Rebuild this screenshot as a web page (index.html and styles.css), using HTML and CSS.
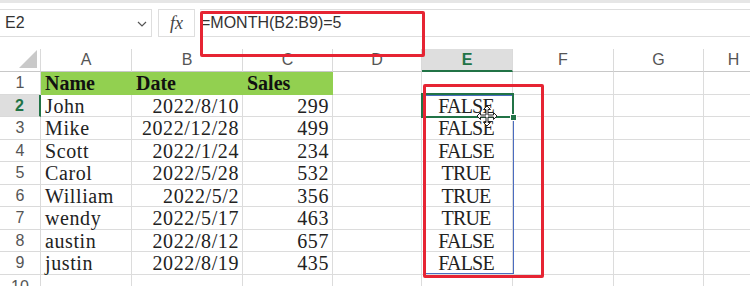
FILE: index.html
```html
<!DOCTYPE html>
<html lang="en">
<head>
  <meta charset="UTF-8">
  <title>MONTH formula</title>
  <link rel="stylesheet" href="styles.css">
</head>
<body>
  <div class="app">
    <div class="top-strip"></div>

    <div class="formula-bar">
      <div class="name-box">
        <span>E2</span>
        <svg class="chevron" width="10" height="6" viewBox="0 0 10 6"><path d="M1 1 L5 5 L9 1" fill="none" stroke="#555" stroke-width="1.2"/></svg>
      </div>
      <div class="fx-box">fx</div>
      <div class="formula-input">=MONTH(B2:B9)=5</div>
    </div>

    <div class="sheet">
      <div class="corner"><span class="tri"></span></div>
      <div class="col-head">A</div>
      <div class="col-head">B</div>
      <div class="col-head">C</div>
      <div class="col-head">D</div>
      <div class="col-head active">E</div>
      <div class="col-head">F</div>
      <div class="col-head">G</div>
      <div class="col-head">H</div>

      <div class="row-head">1</div>
      <div class="cell hdr left">Name</div>
      <div class="cell hdr left">Date</div>
      <div class="cell hdr left">Sales</div>
      <div class="cell"></div><div class="cell"></div><div class="cell"></div><div class="cell"></div><div class="cell"></div>

      <div class="row-head active">2</div>
      <div class="cell left">John</div>
      <div class="cell right">2022/8/10</div>
      <div class="cell right">299</div>
      <div class="cell"></div>
      <div class="cell bool">FALSE</div>
      <div class="cell"></div><div class="cell"></div><div class="cell"></div>

      <div class="row-head">3</div>
      <div class="cell left">Mike</div>
      <div class="cell right">2022/12/28</div>
      <div class="cell right">499</div>
      <div class="cell"></div>
      <div class="cell bool">FALSE</div>
      <div class="cell"></div><div class="cell"></div><div class="cell"></div>

      <div class="row-head">4</div>
      <div class="cell left">Scott</div>
      <div class="cell right">2022/1/24</div>
      <div class="cell right">234</div>
      <div class="cell"></div>
      <div class="cell bool">FALSE</div>
      <div class="cell"></div><div class="cell"></div><div class="cell"></div>

      <div class="row-head">5</div>
      <div class="cell left">Carol</div>
      <div class="cell right">2022/5/28</div>
      <div class="cell right">532</div>
      <div class="cell"></div>
      <div class="cell bool">TRUE</div>
      <div class="cell"></div><div class="cell"></div><div class="cell"></div>

      <div class="row-head">6</div>
      <div class="cell left">William</div>
      <div class="cell right">2022/5/2</div>
      <div class="cell right">356</div>
      <div class="cell"></div>
      <div class="cell bool">TRUE</div>
      <div class="cell"></div><div class="cell"></div><div class="cell"></div>

      <div class="row-head">7</div>
      <div class="cell left">wendy</div>
      <div class="cell right">2022/5/17</div>
      <div class="cell right">463</div>
      <div class="cell"></div>
      <div class="cell bool">TRUE</div>
      <div class="cell"></div><div class="cell"></div><div class="cell"></div>

      <div class="row-head">8</div>
      <div class="cell left">austin</div>
      <div class="cell right">2022/8/12</div>
      <div class="cell right">657</div>
      <div class="cell"></div>
      <div class="cell bool">FALSE</div>
      <div class="cell"></div><div class="cell"></div><div class="cell"></div>

      <div class="row-head">9</div>
      <div class="cell left">justin</div>
      <div class="cell right">2022/8/19</div>
      <div class="cell right">435</div>
      <div class="cell"></div>
      <div class="cell bool">FALSE</div>
      <div class="cell"></div><div class="cell"></div><div class="cell"></div>

      <div class="row-head last">10</div>
      <div class="cell"></div><div class="cell"></div><div class="cell"></div><div class="cell"></div>
      <div class="cell"></div><div class="cell"></div><div class="cell"></div><div class="cell"></div>
    </div>

    <!-- overlays -->
    <div class="spill-range"></div>
    <div class="selection"></div>
    <div class="fill-handle"></div>
    <svg class="move-cursor" width="22" height="22" viewBox="0 0 22 22">
      <path d="M11 1 L14.5 4.5 L12 4.5 L12 10 L17.5 10 L17.5 7.5 L21 11 L17.5 14.5 L17.5 12 L12 12 L12 17.5 L14.5 17.5 L11 21 L7.5 17.5 L10 17.5 L10 12 L4.5 12 L4.5 14.5 L1 11 L4.5 7.5 L4.5 10 L10 10 L10 4.5 L7.5 4.5 Z" fill="#fff" stroke="#222" stroke-width="1" stroke-linejoin="round"/>
    </svg>
    <div class="mark mark-formula"></div>
    <div class="mark mark-result"></div>
  </div>
</body>
</html>
```

FILE: styles.css
```css
* {
  box-sizing: border-box;
}

body {
  margin: 0;
  background: #fff;
  font-family: 'Liberation Sans', Arial, sans-serif;
  overflow: hidden;
}

.app {
  position: relative;
  width: 750px;
  height: 286px;
  overflow: hidden;
}

.top-strip {
  height: 3px;
  background: #e6e6e6;
}

.formula-bar {
  display: flex;
  padding-top: 6px;
  height: 46px;
  background: #fff;
}

.name-box {
  width: 152px;
  height: 28px;
  border: 1px solid #dedede;
  border-left: none;
  display: flex;
  align-items: center;
  justify-content: space-between;
  padding: 0 4px 0 5px;
  font-size: 16px;
  color: #333;
}

.chevron {
  margin-top: 1px;
}

.fx-box {
  width: 37px;
  height: 28px;
  margin-left: 6px;
  border: 1px solid #dedede;
  display: flex;
  align-items: center;
  justify-content: center;
  font-family: 'Liberation Serif', serif;
  font-style: italic;
  font-size: 18px;
  color: #444;
}

.formula-input {
  flex: 1;
  height: 28px;
  margin-left: 5px;
  border-top: 1px solid #dedede;
  border-bottom: 1px solid #dedede;
  display: flex;
  align-items: center;
  padding-left: 1px;
  font-size: 16px;
  color: #333;
}

.sheet {
  display: grid;
  grid-template-columns: 41px 91px 111px 90px 89px 91px 101px 90px 60px;
  grid-template-rows: 23px 23px 22px 23px 22px 23px 22px 23px 22px 23px 23px;
}

.corner {
  position: relative;
  background: #fff;
  border-right: 1px solid #dadada;
  border-bottom: 1px solid #c8c8c8;
}

.corner .tri {
  position: absolute;
  right: 3px;
  bottom: 3px;
  width: 18px;
  height: 18px;
  background: #c9c9c9;
  clip-path: polygon(100% 0, 100% 100%, 0 100%);
}

.col-head {
  background: #fff;
  border-right: 1px solid #dadada;
  border-bottom: 1px solid #c8c8c8;
  display: flex;
  align-items: center;
  justify-content: center;
  font-size: 16px;
  color: #555;
}

.col-head.active {
  background: #dedede;
  color: #217346;
  font-weight: bold;
  border-bottom: 2px solid #217346;
}

.row-head {
  background: #fff;
  border-right: 1px solid #dadada;
  border-bottom: 1px solid #dadada;
  display: flex;
  align-items: center;
  justify-content: center;
  font-size: 16px;
  color: #555;
}

.row-head.last {
  align-items: flex-start;
  padding-top: 3px;
}

.row-head.active {
  background: #dedede;
  color: #217346;
  font-weight: bold;
  border-right: 2px solid #217346;
}

.cell {
  border-right: 1px solid #dcdcdc;
  border-bottom: 1px solid #dcdcdc;
  display: flex;
  align-items: center;
  font-family: 'Liberation Serif', 'Times New Roman', serif;
  font-size: 20px;
  letter-spacing: 0.6px;
  color: #222;
  white-space: nowrap;
  padding-top: 1px;
}

.cell.left {
  padding-left: 4px;
}

.cell.right {
  justify-content: flex-end;
  padding-right: 3px;
}

.cell.bool {
  justify-content: center;
  letter-spacing: -0.8px;
  padding-right: 2px;
}

.cell.hdr {
  background: #92d050;
  border-color: #92d050;
  font-weight: bold;
  color: #111;
  letter-spacing: 0;
}

.spill-range {
  position: absolute;
  left: 423px;
  top: 95px;
  width: 91px;
  height: 179px;
  border: 1px solid #4a6cc0;
}

.selection {
  position: absolute;
  left: 421px;
  top: 93px;
  width: 93px;
  height: 25px;
  border: 2px solid #217346;
}

.fill-handle {
  position: absolute;
  left: 510px;
  top: 114px;
  width: 7px;
  height: 7px;
  background: #217346;
  border: 1px solid #fff;
}

.move-cursor {
  position: absolute;
  left: 476px;
  top: 105px;
}

.mark {
  position: absolute;
  border: 3px solid #e62433;
  border-radius: 2px;
}

.mark-formula {
  left: 200px;
  top: 11px;
  width: 225px;
  height: 46px;
}

.mark-result {
  left: 423px;
  top: 84px;
  width: 121px;
  height: 194px;
}
```
